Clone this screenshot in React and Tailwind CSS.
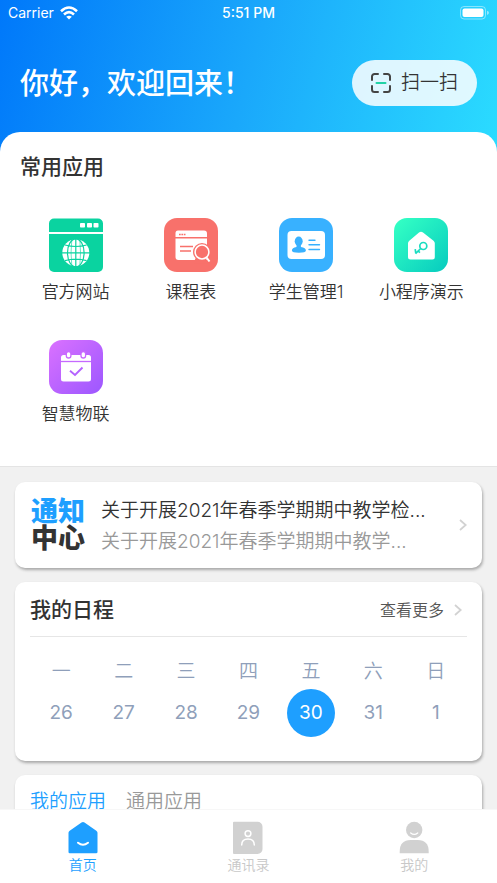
import React, { useState } from 'react';

const WebsiteIcon = () => (
  <svg viewBox="0 0 54 54" className="size-[54px]" aria-hidden="true">
    <path d="M5 0.5h44a5 5 0 0 1 5 5V14H0V5.500a5 5 0 0 1 5-5z" fill="#0ad3a0" />
    <path d="M0 16h54v33a5 5 0 0 1-5 5H5a5 5 0 0 1-5-5z" fill="#0ad3a0" />
    <g fill="#fff">
      <rect x="31" y="5" width="5" height="4.500" rx="0.800" />
      <rect x="38" y="5" width="5" height="4.500" rx="0.800" />
      <rect x="44.500" y="5" width="5" height="4.500" rx="0.800" />
      <circle cx="26.800" cy="34.800" r="13.500" />
    </g>
    <g fill="none" stroke="#0ad3a0" strokeWidth="1.200">
      <ellipse cx="26.800" cy="34.800" rx="8.300" ry="14" />
      <path d="M26.800 21v28M13 34.800h28M16 27q10.800 3 21.600 0M16 42.600q10.800-3 21.600 0" />
      <path d="M22.800 21.500q-1.500 13 0 26.500M30.800 21.500q1.500 13 0 26.500" strokeWidth="0.600" />
    </g>
  </svg>
);

const TimetableIcon = () => (
  <svg viewBox="0 0 54 54" className="size-[54px]" aria-hidden="true">
    <rect width="54" height="54" rx="13" fill="#f8716b" />
    <path d="M14 12.500h26a3 3 0 0 1 3 3V19H11.500v-4a2.500 2.500 0 0 1 2.500-2.500z" fill="#fff" />
    <path d="M11.500 20.500H43V42H14.500a3 3 0 0 1-3-3z" fill="#fff" />
    <path d="M15 16.500h6.500" stroke="#f8716b" strokeWidth="1.500" strokeDasharray="1.700 0.700" />
    <path d="M16 28.500h13M16 33h11" stroke="#f8716b" strokeWidth="1.500" />
    <path d="M30 43.500l3-6 7 5h5v3H30z" fill="#f8716b" />
    <circle cx="38" cy="34" r="9" fill="#f8716b" />
    <circle cx="38" cy="34" r="6.900" fill="#f8716b" stroke="#fff" strokeWidth="1.500" />
    <path d="M42.500 39.500l3 4" stroke="#fff" strokeWidth="2" />
  </svg>
);

const StudentIcon = () => (
  <svg viewBox="0 0 54 54" className="size-[54px]" aria-hidden="true">
    <rect width="54" height="54" rx="13" fill="#38b1ff" />
    <rect x="8.500" y="13" width="37.500" height="28" rx="4" fill="#fff" />
    <g fill="#38b1ff">
      <ellipse cx="19.700" cy="23.300" rx="4" ry="4.700" />
      <path d="M17.500 26h4.400v3q5 .8 5 3.500 0 2.200-7 2.200t-7-2.200q0-2.700 4.600-3.500z" />
    </g>
    <path d="M30 22.300h6M30 26.800h10.500M30 31.500h10.500" stroke="#38b1ff" strokeWidth="1.400" strokeLinecap="round" />
  </svg>
);

const DemoIcon = () => (
  <svg viewBox="0 0 54 54" className="size-[54px]" aria-hidden="true">
    <defs>
      <linearGradient id="demoFill" x1="0" y1="0" x2="1" y2="1">
        <stop offset="0.050" stopColor="#33ffc4" />
        <stop offset="1" stopColor="#06cbbf" />
      </linearGradient>
    </defs>
    <rect width="54" height="54" rx="13" fill="url(#demoFill)" />
    <path d="M25 14.500q2-1.600 4 0l10.500 8.200q1.300 1 1.300 2.600V39a2.500 2.500 0 0 1-2.500 2.500H16.500A2.500 2.500 0 0 1 14 39V25.300q0-1.600 1.300-2.600z" fill="#fff" />
    <g fill="none" stroke="#19dcc0" strokeWidth="1.700">
      <circle cx="29.300" cy="28" r="3.500" />
      <path d="M26.700 30.500l-5.200 5.200M24.200 33l1.700 1.700M21.200 31.200l.6 4.300" />
    </g>
  </svg>
);

const IotIcon = () => (
  <svg viewBox="0 0 54 54" className="size-[54px]" aria-hidden="true">
    <defs>
      <linearGradient id="iotFill" x1="0" y1="0" x2="1" y2="1">
        <stop offset="0.050" stopColor="#d770ff" />
        <stop offset="1" stopColor="#9c57ff" />
      </linearGradient>
    </defs>
    <rect width="54" height="54" rx="13" fill="url(#iotFill)" />
    <path d="M14.500 15h25a2.500 2.500 0 0 1 2.500 2.500V39a2.500 2.500 0 0 1-2.500 2.500h-25A2.500 2.500 0 0 1 12 39V17.500a2.500 2.500 0 0 1 2.500-2.500z" fill="#fff" />
    <path d="M12 21.500h30" stroke="#c569ff" strokeWidth="1.300" />
    <g fill="#fff" stroke="#c869ff" strokeWidth="1.300">
      <rect x="17.300" y="11.500" width="4.600" height="6.500" rx="2.300" />
      <rect x="32" y="11.500" width="4.600" height="6.500" rx="2.300" />
    </g>
    <path d="M21 30.800l5 4.200 7.500-7.500" fill="none" stroke="#b462ff" strokeWidth="1.900" />
  </svg>
);

const Chevron = () => (
  <svg viewBox="0 0 8 12" className="h-3 w-2 shrink-0" aria-hidden="true">
    <path d="M1 1l5.700 5L1 11" fill="none" stroke="#d2d2d2" strokeWidth="1.800" />
  </svg>
);

const HomeIcon = () => (
  <svg viewBox="0 0 32 34" className="h-[34px] w-8" aria-hidden="true">
    <path d="M14.500 1.500q1.500-1.200 3 0l11.800 8.300q1.200.8 1.200 2V31a1.300 1.300 0 0 1-1.300 1.300H2.800A1.300 1.300 0 0 1 1.500 31V11.800q0-1.200 1.200-2z" fill="#1e9fff" />
    <path d="M11 21.700q5 4.200 10 0" fill="none" stroke="#fff" strokeWidth="2" strokeLinecap="round" />
  </svg>
);

const ContactsIcon = () => (
  <svg viewBox="0 0 32 34" className="h-[34px] w-8" aria-hidden="true">
    <path d="M2 .8h23.500a5 5 0 0 1 5 5V28a5 5 0 0 1-5 5H2a1 1 0 0 1-1-1V1.800a1 1 0 0 1 1-1z" fill="#d1d1d1" />
    <g fill="none" stroke="#fff" strokeWidth="1.500" strokeLinecap="round">
      <circle cx="16" cy="12.600" r="2.900" />
      <path d="M9.700 24q0-6 6.300-6t6.300 6" />
    </g>
  </svg>
);

const MineIcon = () => (
  <svg viewBox="0 0 32 34" className="h-[34px] w-8" aria-hidden="true">
    <circle cx="16.200" cy="9" r="8.200" fill="#d1d1d1" />
    <path d="M1.700 32.300v-1.600q0-11.700 11-11.700h7q11 0 11 11.700v1.600z" fill="#d1d1d1" />
    <path d="M12.700 12q3.500 2.800 7 0" fill="none" stroke="#fff" strokeWidth="1.300" strokeLinecap="round" />
  </svg>
);

const apps = [
  { name: '官方网站', icon: <WebsiteIcon /> },
  { name: '课程表', icon: <TimetableIcon /> },
  { name: '学生管理1', icon: <StudentIcon /> },
  { name: '小程序演示', icon: <DemoIcon /> },
  { name: '智慧物联', icon: <IotIcon /> },
];

const week = [
  { day: '一', date: 26 },
  { day: '二', date: 27 },
  { day: '三', date: 28 },
  { day: '四', date: 29 },
  { day: '五', date: 30 },
  { day: '六', date: 31 },
  { day: '日', date: 1 },
];

const navItems = [
  { name: '首页', icon: <HomeIcon />, active: true },
  { name: '通讯录', icon: <ContactsIcon /> },
  { name: '我的', icon: <MineIcon /> },
];

const StatusBar = () => (
  <div className="grid h-[26px] grid-cols-3 items-center px-2 text-sm text-white">
    <div className="flex items-center gap-[6px]">
      <span>Carrier</span>
      <svg viewBox="0 0 18 14" className="h-[14px] w-[18px]" aria-hidden="true">
        <g fill="none" stroke="#fff" strokeWidth="2.600">
          <path d="M1 5.200q8-7.400 16 0" />
          <path d="M4 8.500q5-4.600 10 0" />
        </g>
        <path d="M9 13.500L6.200 10.800q2.800-2.200 5.600 0z" fill="#fff" />
      </svg>
    </div>
    <span className="text-center font-medium">5:51 PM</span>
    <svg viewBox="0 0 29 14" className="h-[14px] w-[29px] justify-self-end" aria-hidden="true">
      <rect x="0.500" y="0.500" width="25" height="12.500" rx="3.500" fill="none" stroke="#fff" strokeOpacity="0.450" />
      <rect x="2.500" y="2.500" width="21" height="8.500" rx="2" fill="#fff" />
      <path d="M27 4.700q2 .5 2 2.100t-2 2.100z" fill="#fff" fillOpacity="0.500" />
    </svg>
  </div>
);

const Card = ({ children, className = '' }) => (
  <section className={`rounded-[10px] bg-white shadow-[1px_2px_3px_rgba(0,0,0,0.3)] ${className}`}>
    {children}
  </section>
);

const App = () => {
  const [tab, setTab] = useState('mine');

  return (
    <div className="flex h-screen flex-col overflow-hidden bg-[#f1f1f1] font-['Inter','Noto_Sans_CJK_SC',sans-serif] text-[#333]">
      <main className="min-h-0 flex-1 overflow-hidden">
        <div className="bg-[linear-gradient(105deg,#0078fa_0%,#1aa8fb_50%,#2bdcff_100%)] pb-5">
          <StatusBar />
          <header className="flex h-[106px] items-center justify-between px-5 pt-2">
            <h1 className="pt-[2px] text-[29px] leading-10 font-medium text-white">你好，欢迎回来！</h1>
            <button type="button" className="flex h-[46px] w-[125px] shrink-0 items-center justify-center gap-[10px] rounded-full bg-white/85 text-[19px] font-[350]">
              <svg viewBox="0 0 20 20" className="size-5" aria-hidden="true">
                <g fill="none" strokeWidth="2" strokeLinecap="round">
                  <path d="M1 7V3.500A2.500 2.500 0 0 1 3.500 1H7M13 1h3.500A2.500 2.500 0 0 1 19 3.500V7M19 13v3.500a2.500 2.500 0 0 1-2.500 2.500H13M7 19H3.500A2.500 2.500 0 0 1 1 16.500V13" stroke="#444" />
                  <path d="M5.500 10h9" stroke="#20d3a5" />
                </g>
              </svg>
              扫一扫
            </button>
          </header>
        </div>

        <section className="-mt-5 rounded-t-[20px] bg-white px-[18px] pt-[21px] pb-[38px]">
          <h2 className="px-[2px] text-[21px] leading-7 font-medium">常用应用</h2>
          <div className="mt-[37px] grid grid-cols-4 gap-y-[34px]">
            {apps.map((app) => (
              <a key={app.name} href="#" className="flex flex-col items-center gap-[6px] text-[17px] leading-7 font-[350] whitespace-nowrap">
                {app.icon}
                {app.name}
              </a>
            ))}
          </div>
        </section>

        <div className="flex flex-col gap-[14px] border-t border-[#e4e4e4] px-[15px] pt-[15px]">
          <Card>
            <a href="#" className="flex h-[86px] items-center pr-[15px] pl-4">
              <span className="w-[54px] shrink-0 text-[27px] leading-[27px] font-black">
                <span className="block text-[#1e9fff]">通知</span>
                <span className="block">中心</span>
              </span>
              <span className="ml-4 flex-1 pt-[2px] text-[19px] leading-[31px] font-[350] whitespace-nowrap">
                <span className="block">关于开展2021年春季学期期中教学检...</span>
                <span className="block text-[#999]">关于开展2021年春季学期期中教学...</span>
              </span>
              <Chevron />
            </a>
          </Card>

          <Card className="px-[15px] pb-[24px]">
            <div className="flex h-[55px] items-center justify-between border-b border-[#e6e6e6]">
              <h2 className="pt-[2px] text-[21px] font-medium">我的日程</h2>
              <a href="#" className="flex items-center gap-[10px] pt-[2px] pr-[5px] text-base font-[350] text-[#555]">
                查看更多
                <Chevron />
              </a>
            </div>
            <table className="mt-[19px] w-full table-fixed text-center text-[#8f9fba]">
              <thead>
                <tr>
                  {week.map((item) => (
                    <th key={item.day} className="h-[33px] p-0 text-[19px] font-[350]">{item.day}</th>
                  ))}
                </tr>
              </thead>
              <tbody>
                <tr>
                  {week.map((item) => (
                    <td key={item.date} className="h-12 p-0">
                      <button
                        type="button"
                        className={
                          item.date === 30
                            ? 'size-12 rounded-full bg-[#1e9fff] text-[19px] text-white'
                            : 'size-12 rounded-full text-[19px]'
                        }
                      >
                        {item.date}
                      </button>
                    </td>
                  ))}
                </tr>
              </tbody>
            </table>
          </Card>

          <Card className="px-[15px] pt-[11px] pb-5">
            <div role="tablist" className="flex gap-5 text-[19px] leading-8 font-[350]">
              <button
                type="button"
                role="tab"
                aria-selected={tab === 'mine'}
                onClick={() => setTab('mine')}
                className={tab === 'mine' ? 'text-[#1e9fff]' : 'text-[#999]'}
              >
                我的应用
              </button>
              <button
                type="button"
                role="tab"
                aria-selected={tab === 'common'}
                onClick={() => setTab('common')}
                className={tab === 'common' ? 'text-[#1e9fff]' : 'text-[#999]'}
              >
                通用应用
              </button>
            </div>
          </Card>
        </div>
      </main>

      <nav className="grid h-[74px] shrink-0 grid-cols-3 border-t border-[#f7f7f7] bg-white">
        {navItems.map((item) => (
          <a
            key={item.name}
            href="#"
            className={`flex flex-col items-center pt-[11px] text-sm font-[350] ${item.active ? 'text-[#1e9fff]' : 'text-[#c8c8c8]'}`}
          >
            {item.icon}
            {item.name}
          </a>
        ))}
      </nav>
    </div>
  );
};

export default App;
